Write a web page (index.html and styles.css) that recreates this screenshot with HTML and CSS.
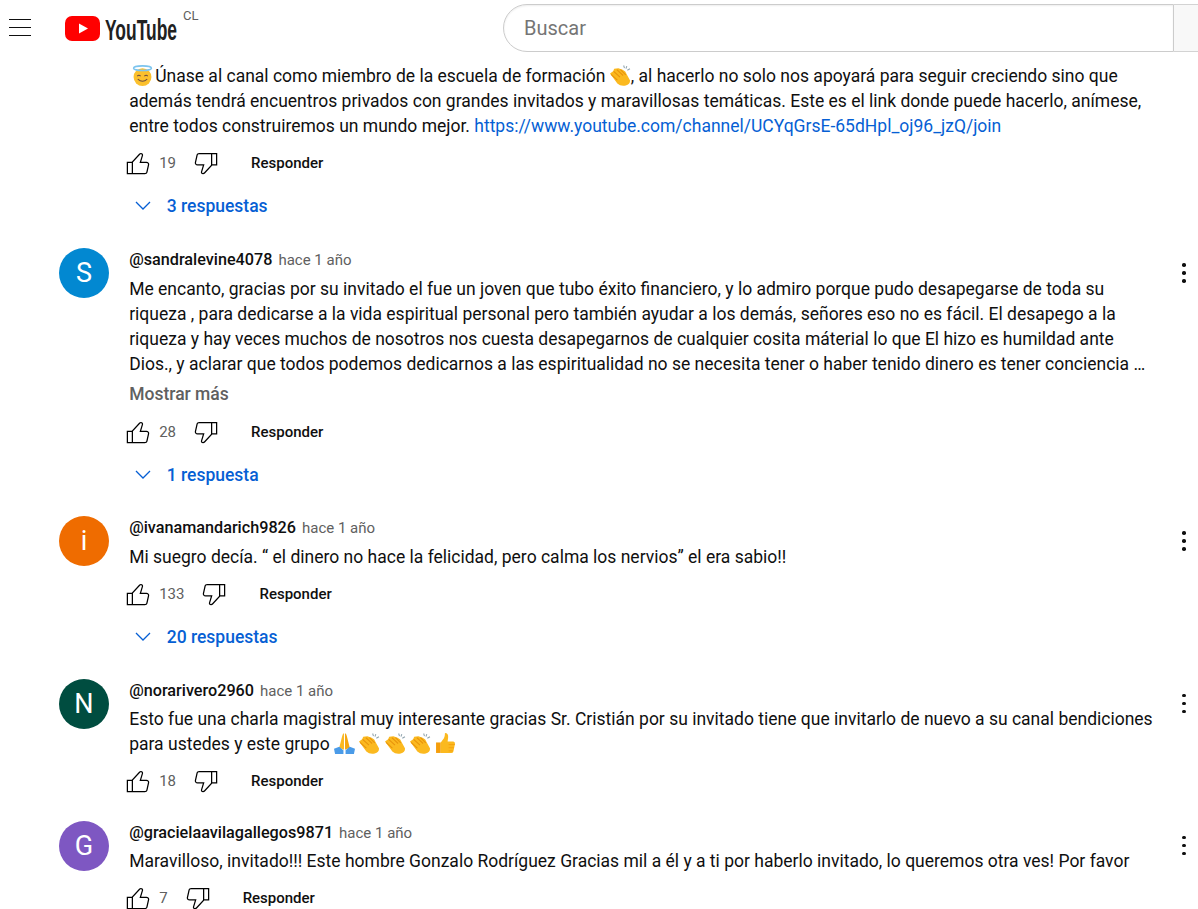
FILE: index.html
```html
<!DOCTYPE html>
<html lang="es">
<head>
  <meta charset="UTF-8">
  <title>Comentarios - YouTube</title>
  <link rel="stylesheet" href="styles.css">
</head>
<body>
  <!-- shared icons -->
  <svg class="defs" width="0" height="0">
    <symbol id="i-like" viewBox="0 0 24 24"><path d="M18.77,11h-4.23l1.52-4.94C16.38,5.03,15.54,4,14.38,4c-0.58,0-1.14,0.24-1.52,0.65L7,11H3v10h4h1h9.43c1.06,0,1.98-0.67,2.19-1.61l1.34-6C21.23,12.15,20.18,11,18.77,11z M7,20H4v-8h3V20z M19.98,13.17l-1.34,6C18.54,19.65,18.03,20,17.43,20H8v-8.61l5.6-6.06C13.79,5.12,14.08,5,14.38,5c0.26,0,0.5,0.11,0.63,0.3c0.07,0.1,0.15,0.26,0.09,0.47l-1.52,4.94L13.18,12h1.35h4.23c0.41,0,0.8,0.17,1.03,0.46C19.92,12.61,20.05,12.86,19.98,13.17z"/></symbol>
    <symbol id="i-dislike" viewBox="0 0 24 24"><path d="M17,4h-1H6.57C5.5,4,4.59,4.67,4.38,5.61l-1.34,6C2.77,12.85,3.82,14,5.23,14h4.23l-1.52,4.94C7.62,19.97,8.46,21,9.62,21c0.58,0,1.14-0.24,1.52-0.65L17,14h4V4H17z M10.4,19.67C10.21,19.88,9.92,20,9.62,20c-0.26,0-0.5-0.11-0.63-0.3c-0.07-0.1-0.15-0.26-0.09-0.47l1.52-4.94l0.4-1.29H9.46H5.23c-0.41,0-0.8-0.17-1.03-0.46c-0.12-0.15-0.25-0.4-0.18-0.72l1.34-6C5.46,5.35,5.97,5,6.57,5H16v8.61L10.4,19.67z M20,13h-3V5h3V13z"/></symbol>
    <symbol id="i-chevron" viewBox="0 0 16 10"><path d="M1 1l7 7 7-7" fill="none" stroke="currentColor" stroke-width="1.3"/></symbol>
    <symbol id="e-halo" viewBox="0 0 20 20">
      <circle cx="10" cy="11.500" r="8.500" fill="#fbc02d"/>
      <ellipse cx="10" cy="3" rx="8.500" ry="2.200" fill="none" stroke="#7cc4ee" stroke-width="1.500"/>
      <path d="M5 10.600q1.600-1.600 3.200 0M11.800 10.600q1.600-1.600 3.200 0M5.500 13.500q4.500 4 9 0" fill="none" stroke="#6d4c41" stroke-width="1"/>
    </symbol>
    <symbol id="e-clap" viewBox="0 0 20 20">
      <path d="M0 8l3-2 1-2.500 4-.5 4 1.500q3 1 4 4.500l3 5.500q.5 3.500-4 5-5 1-8-2z" fill="#fbb91f"/>
      <path d="M1 9l6 5.500M3.500 6l6 5.500M6.500 4.500l6 5.500M10 4.500l5 5" fill="none" stroke="#e8930c" stroke-width="1"/>
      <path d="M13 .5l.8 2.500M16 1l-.8 2.500M19 3.500l-2.500 1.500" fill="none" stroke="#90a4ae" stroke-width="1"/>
    </symbol>
    <symbol id="e-pray" viewBox="0 0 20 20">
      <path d="M9.500 0q-1.500 1-2 4L5 14l4.500 2z" fill="#fbb91f"/>
      <path d="M10.500 0q1.500 1 2 4l2.500 10-4.500 2z" fill="#f5a60f"/>
      <path d="M0 15l5-2 4 3.500V20H1z" fill="#4a9be8"/>
      <path d="M20 15l-5-2-4 3.500V20h8z" fill="#4a9be8"/>
    </symbol>
    <symbol id="e-thumb" viewBox="0 0 20 20">
      <path d="M1 9h4.500v10H1z" fill="#f59e0b"/>
      <path d="M5.500 9l3-4q1-2 1-5 3.500 0 3 4.500L12 8h5.500q2 .5 1.500 2.500l-1.500 7q-.5 1.500-2 1.500H5.500z" fill="#fbb91f"/>
      <path d="M13 11h6M13 14h5M13 17h4" fill="none" stroke="#f59e0b" stroke-width=".8"/>
    </symbol>
  </svg>

  <header class="topbar">
    <div class="brand">
      <button class="menu-btn" aria-label="Menú"><span></span><span></span><span></span></button>
      <a class="logo" href="#">
        <svg class="logo-mark" viewBox="0 0 35 25" width="35" height="25">
          <rect width="35" height="25" rx="7" fill="#f00"/>
          <path d="M14 7.500L23 12.500 14 17.500z" fill="#fff"/>
        </svg>
        <svg class="logo-word" width="73" height="32" viewBox="0 0 73 32">
          <text x="0" y="28" textLength="72" lengthAdjust="spacingAndGlyphs">YouTube</text>
        </svg>
        <span class="country">CL</span>
      </a>
    </div>
    <div class="search">
      <div class="search-box">Buscar</div>
      <div class="search-btn"></div>
    </div>
  </header>

  <main class="comments">
    <article class="comment">
      <div></div>
      <div class="comment-body">
        <p class="comment-text"><svg class="emoji first-emoji"><use href="#e-halo"/></svg>Únase al canal como miembro de la escuela de formación <svg class="emoji"><use href="#e-clap"/></svg>, al hacerlo no solo nos apoyará para seguir creciendo sino que además tendrá encuentros privados con grandes invitados y maravillosas temáticas. Este es el link donde puede hacerlo, anímese, entre todos construiremos un mundo mejor. <a href="#">https://www.youtube.com/channel/UCYqGrsE-65dHpl_oj96_jzQ/join</a></p>
        <div class="actions">
          <svg class="thumb"><use href="#i-like"/></svg>
          <span class="count">19</span>
          <svg class="thumb dislike"><use href="#i-dislike"/></svg>
          <span class="reply">Responder</span>
        </div>
        <div class="replies"><svg class="chevron"><use href="#i-chevron"/></svg>3 respuestas</div>
      </div>
      <div></div>
    </article>

    <article class="comment has-more">
      <div class="avatar blue">S</div>
      <div class="comment-body">
        <div class="meta"><b>@sandralevine4078</b><span>hace 1 año</span></div>
        <p class="comment-text">Me encanto, gracias por su invitado el fue un joven que tubo éxito financiero, y lo admiro porque pudo desapegarse de toda su riqueza , para dedicarse a la vida espiritual personal pero también ayudar a los demás, señores eso no es fácil. El desapego a la riqueza y hay veces muchos de nosotros nos cuesta desapegarnos de cualquier cosita máterial lo que El hizo es humildad ante Dios., y aclarar que todos podemos dedicarnos a las espiritualidad no se necesita tener o haber tenido dinero es tener conciencia …</p>
        <div class="more">Mostrar más</div>
        <div class="actions">
          <svg class="thumb"><use href="#i-like"/></svg>
          <span class="count">28</span>
          <svg class="thumb dislike"><use href="#i-dislike"/></svg>
          <span class="reply">Responder</span>
        </div>
        <div class="replies"><svg class="chevron"><use href="#i-chevron"/></svg>1 respuesta</div>
      </div>
      <div class="dots"><i></i><i></i><i></i></div>
    </article>

    <article class="comment">
      <div class="avatar orange">i</div>
      <div class="comment-body">
        <div class="meta"><b>@ivanamandarich9826</b><span>hace 1 año</span></div>
        <p class="comment-text">Mi suegro decía. “ el dinero no hace la felicidad, pero calma los nervios” el era sabio!!</p>
        <div class="actions">
          <svg class="thumb"><use href="#i-like"/></svg>
          <span class="count">133</span>
          <svg class="thumb dislike"><use href="#i-dislike"/></svg>
          <span class="reply">Responder</span>
        </div>
        <div class="replies"><svg class="chevron"><use href="#i-chevron"/></svg>20 respuestas</div>
      </div>
      <div class="dots"><i></i><i></i><i></i></div>
    </article>

    <article class="comment no-replies">
      <div class="avatar green">N</div>
      <div class="comment-body">
        <div class="meta"><b>@norarivero2960</b><span>hace 1 año</span></div>
        <p class="comment-text">Esto fue una charla magistral muy interesante gracias Sr. Cristián por su invitado tiene que invitarlo de nuevo a su canal bendiciones para ustedes y este grupo <svg class="emoji"><use href="#e-pray"/></svg> <svg class="emoji"><use href="#e-clap"/></svg> <svg class="emoji"><use href="#e-clap"/></svg> <svg class="emoji"><use href="#e-clap"/></svg> <svg class="emoji"><use href="#e-thumb"/></svg></p>
        <div class="actions">
          <svg class="thumb"><use href="#i-like"/></svg>
          <span class="count">18</span>
          <svg class="thumb dislike"><use href="#i-dislike"/></svg>
          <span class="reply">Responder</span>
        </div>
      </div>
      <div class="dots"><i></i><i></i><i></i></div>
    </article>

    <article class="comment">
      <div class="avatar purple">G</div>
      <div class="comment-body">
        <div class="meta"><b>@gracielaavilagallegos9871</b><span>hace 1 año</span></div>
        <p class="comment-text">Maravilloso, invitado!!! Este hombre Gonzalo Rodríguez Gracias mil a él y a ti por haberlo invitado, lo queremos otra ves! Por favor</p>
        <div class="actions">
          <svg class="thumb"><use href="#i-like"/></svg>
          <span class="count">7</span>
          <svg class="thumb dislike"><use href="#i-dislike"/></svg>
          <span class="reply">Responder</span>
        </div>
      </div>
      <div class="dots"><i></i><i></i><i></i></div>
    </article>
  </main>
</body>
</html>
```

FILE: styles.css
```css
html, body {
  height: 909px;
  overflow: hidden;
}

body {
  font-family: Roboto, Arial, sans-serif;
  background-color: #fff;
  color: #0f0f0f;
  margin: 0;
}

.defs {
  display: block;
  height: 0;
}

.topbar {
  display: flex;
  align-items: center;
  height: 56px;
  background-color: #fff;
}

.brand {
  display: flex;
  align-items: center;
  width: 503px;
  flex-shrink: 0;
}

.menu-btn {
  display: flex;
  flex-direction: column;
  gap: 7px;
  width: 22px;
  margin-left: 9px;
  margin-top: -1px;
  padding: 0;
  border: none;
  background: none;
}

.menu-btn span {
  display: block;
  height: 1px;
  background-color: #0f0f0f;
}

.logo {
  display: flex;
  align-items: center;
  margin-left: 34px;
  text-decoration: none;
}

.logo-word {
  margin-left: 5px;
}

.logo-word text {
  font-family: "Liberation Sans", Arial, sans-serif;
  font-weight: bold;
  font-size: 30px;
  fill: #212121;
}

.country {
  margin-left: 5px;
  margin-top: -26px;
  font-size: 13px;
  color: #606060;
}

.search {
  display: flex;
  flex: 1;
  height: 48px;
}

.search-box {
  width: 671px;
  box-sizing: border-box;
  padding-left: 20px;
  line-height: 46px;
  font-size: 20px;
  color: #757575;
  border: 1px solid #ccc;
  border-radius: 24px 0 0 24px;
  box-shadow: inset 0 1px 2px #eee;
}

.search-btn {
  flex: 1;
  background-color: #f8f8f8;
  border-top: 1px solid #d3d3d3;
  border-bottom: 1px solid #d3d3d3;
}

.comments {
  padding-top: 8px;
}

.comment {
  display: grid;
  grid-template-columns: 55.200px 1025.800px 28px;
  column-gap: 15px;
  align-items: start;
  margin-left: 59px;
  margin-bottom: 24px;
}

.comment.has-more {
  margin-bottom: 23.500px;
}

.comment.no-replies {
  margin-bottom: 21.500px;
}

.avatar {
  width: 50px;
  height: 50px;
  border-radius: 50%;
  color: #fff;
  font-size: 27px;
  line-height: 50px;
  text-align: center;
}

.blue { background-color: #0288d1; }
.orange { background-color: #ef6c00; }
.green { background-color: #004d40; }
.purple { background-color: #7e57c2; }

.meta {
  display: flex;
  align-items: baseline;
  gap: 6px;
  height: 22px;
  line-height: 24px;
  margin-bottom: 6.500px;
}

.meta b {
  font-size: 16.200px;
  font-weight: 500;
}

.meta span {
  font-size: 15px;
  color: #606060;
}

.comment-text {
  margin: 0;
  font-size: 17.500px;
  line-height: 25px;
}

.comment-text a {
  color: #065fd4;
  text-decoration: none;
}

.emoji {
  width: 21px;
  height: 21px;
  vertical-align: -4px;
}

.first-emoji {
  margin-left: 3px;
  margin-right: 2px;
}

.more {
  margin-top: 5.500px;
  margin-bottom: 7.500px;
  line-height: 24px;
  font-size: 17.500px;
  font-weight: 500;
  color: #606060;
}

.actions {
  display: flex;
  align-items: center;
  height: 36px;
  margin-top: 6px;
  margin-left: -6px;
  font-size: 15px;
}

.thumb {
  width: 30px;
  height: 30px;
  flex-shrink: 0;
}

.dislike {
  margin-left: 15px;
}

.count {
  margin-left: 6px;
  color: #606060;
}

.reply {
  margin-left: 30px;
  font-weight: 500;
}

.replies {
  display: flex;
  align-items: center;
  height: 36px;
  margin-top: 7px;
  font-size: 17.500px;
  font-weight: 500;
  color: #065fd4;
}

.chevron {
  width: 16px;
  height: 10px;
  margin-left: 5.500px;
  margin-right: 16px;
}

.dots {
  display: flex;
  flex-direction: column;
  align-items: center;
  gap: 4.500px;
  padding-top: 15px;
}

.dots i {
  width: 3.500px;
  height: 3.500px;
  border-radius: 50%;
  background-color: #0f0f0f;
}
```
